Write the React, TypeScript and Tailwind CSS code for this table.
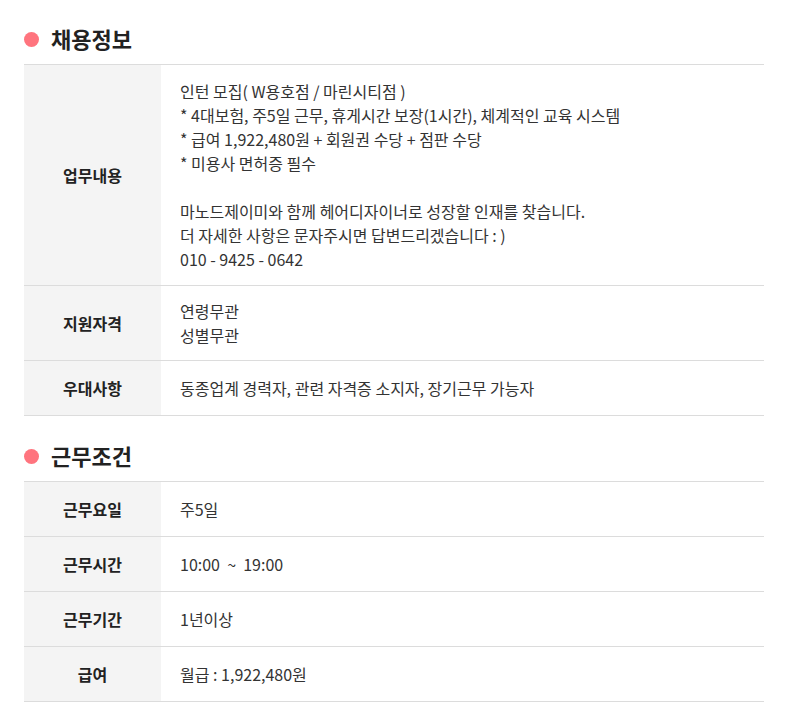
const font = { fontFamily: '"Noto Sans CJK KR", "Noto Sans", sans-serif' };

type Row = { label: string; lines: string[]; pad: string };

const recruitRows: Row[] = [
  {
    label: '업무내용',
    pad: 'py-[14px]',
    lines: [
      '인턴 모집( W용호점 / 마린시티점 )',
      '* 4대보험, 주5일 근무, 휴게시간 보장(1시간), 체계적인 교육 시스템',
      '* 급여 1,922,480원 + 회원권 수당 + 점판 수당',
      '* 미용사 면허증 필수',
      '',
      '마노드제이미와 함께 헤어디자이너로 성장할 인재를 찾습니다.',
      '더 자세한 사항은 문자주시면 답변드리겠습니다 : )',
      '010 - 9425 - 0642',
    ],
  },
  { label: '지원자격', pad: 'py-[13px]', lines: ['연령무관', '성별무관'] },
  { label: '우대사항', pad: 'py-[15px]', lines: ['동종업계 경력자, 관련 자격증 소지자, 장기근무 가능자'] },
];

const workRows: Row[] = [
  { label: '근무요일', pad: 'py-[15px]', lines: ['주5일'] },
  { label: '근무시간', pad: 'py-[15px]', lines: ['10:00  ~  19:00'] },
  { label: '근무기간', pad: 'py-[15px]', lines: ['1년이상'] },
  { label: '급여', pad: 'py-[15px]', lines: ['월급 : 1,922,480원'] },
];

function Section({ title, rows, className }: { title: string; rows: Row[]; className?: string }) {
  return (
    <section className={className}>
      <h2 className="flex h-[30px] items-center gap-[12px] text-[22px] font-bold text-[#222]">
        <span className="h-[15px] w-[15px] rounded-full bg-[#ff747e]" />
        <span className="-mt-[2px]">{title}</span>
      </h2>
      <div className="mt-[10px] border-t border-[#dcdcdc]">
        {rows.map((row) => (
          <div key={row.label} className="flex border-b border-[#dcdcdc]">
            <div className="flex w-[137px] shrink-0 items-center justify-center bg-[#f4f4f4] text-[16px] font-bold text-[#222]">
              {row.label}
            </div>
            <div className={`flex-1 pl-[19px] text-[16px] leading-[24px] text-[#333] ${row.pad}`}>
              {row.lines.map((line, i) => (
                <div key={i} className="h-[24px] whitespace-pre">
                  {line}
                </div>
              ))}
            </div>
          </div>
        ))}
      </div>
    </section>
  );
}

export default function App() {
  return (
    <div className="h-[724px] w-[801px] bg-white px-[24px] pt-[24px]" style={font}>
      <div className="w-[740px]">
        <Section title="채용정보" rows={recruitRows} />
        <Section title="근무조건" rows={workRows} className="mt-[25px]" />
      </div>
    </div>
  );
}
